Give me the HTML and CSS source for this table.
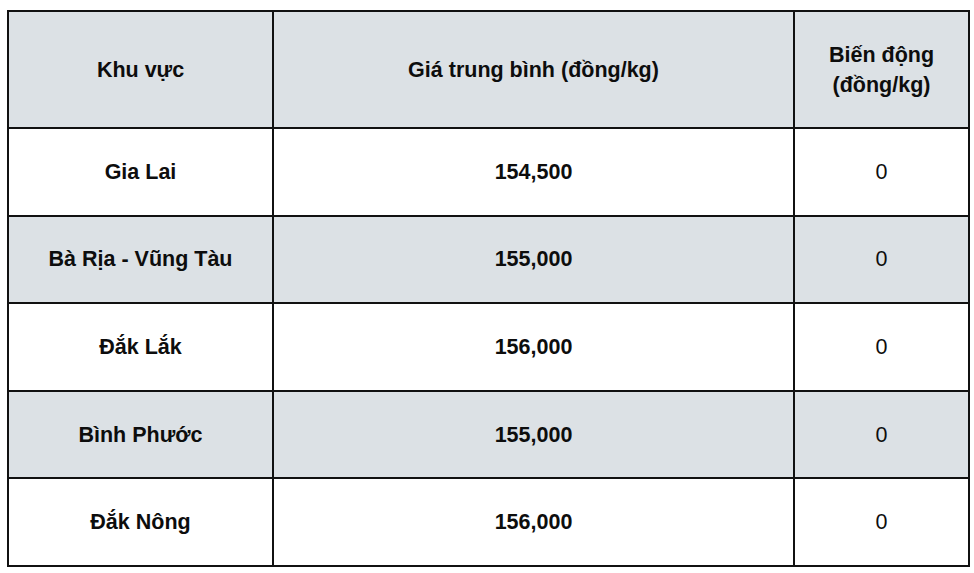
FILE: index.html
```html
<!DOCTYPE html>
<html lang="vi">
<head>
<meta charset="utf-8">
<title>Giá</title>
<link rel="stylesheet" href="styles.css">
</head>
<body>
<table class="price-table">
  <colgroup>
    <col class="c1">
    <col class="c2">
    <col class="c3">
  </colgroup>
  <thead>
    <tr class="head-row">
      <th>Khu vực</th>
      <th>Giá trung bình (đồng/kg)</th>
      <th>Biến động<br>(đồng/kg)</th>
    </tr>
  </thead>
  <tbody>
    <tr><td class="b">Gia Lai</td><td class="b">154,500</td><td>0</td></tr>
    <tr class="alt"><td class="b">Bà Rịa - Vũng Tàu</td><td class="b">155,000</td><td>0</td></tr>
    <tr><td class="b">Đắk Lắk</td><td class="b">156,000</td><td>0</td></tr>
    <tr class="alt"><td class="b">Bình Phước</td><td class="b">155,000</td><td>0</td></tr>
    <tr><td class="b">Đắk Nông</td><td class="b">156,000</td><td>0</td></tr>
  </tbody>
</table>
</body>
</html>
```
FILE: styles.css
```css
html, body {
  margin: 0;
  background: #ffffff;
}
body {
  padding: 10px 0 0 7px;
  font-family: "Liberation Sans", Arial, sans-serif;
  color: #0d0d0d;
}
.price-table {
  border-collapse: collapse;
  table-layout: fixed;
  width: 961px;
  font-size: 21.5px;
  line-height: 30px;
}
.c1 { width: 265px; }
.c2 { width: 521px; }
.c3 { width: 175px; }
.price-table th,
.price-table td {
  border: 2px solid #111;
  text-align: center;
  vertical-align: middle;
  padding: 0 8px;
}
.price-table th {
  font-weight: bold;
  background: #dce1e5;
}
.head-row { height: 117px; }
.price-table tbody tr { height: 87.6px; }
.price-table td { font-weight: normal; }
.price-table td.b { font-weight: bold; }
.alt td { background: #dce1e5; }
```
